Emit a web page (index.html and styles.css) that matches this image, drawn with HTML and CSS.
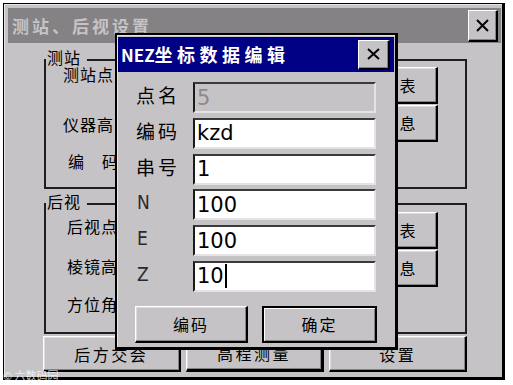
FILE: index.html
```html
<!DOCTYPE html>
<html lang="zh">
<head>
<meta charset="utf-8">
<title>测站、后视设置</title>
<link rel="stylesheet" href="styles.css">
</head>
<body>
<div class="window">
  <div class="titlebar">
    <span class="title">测站、后视设置</span>
    <div class="close-btn">
      <svg width="13" height="13" viewBox="0 0 13 13"><path d="M1 1 L12 12 M12 1 L1 12" stroke="#000" stroke-width="2" fill="none"/></svg>
    </div>
  </div>
  <div class="client">
    <div class="group g1">
      <span class="legend">测站</span>
      <div class="labels">
        <div class="lbl">测站点名</div>
        <div class="lbl">仪器高</div>
        <div class="lbl lbl-code">编　码</div>
      </div>
      <div class="side-btns">
        <div class="btn side-btn">坐标列表</div>
        <div class="btn side-btn">测站信息</div>
      </div>
    </div>
    <div class="group g2">
      <span class="legend">后视</span>
      <div class="labels">
        <div class="lbl">后视点名</div>
        <div class="lbl">棱镜高</div>
        <div class="lbl">方位角</div>
      </div>
      <div class="side-btns">
        <div class="btn side-btn">坐标列表</div>
        <div class="btn side-btn">后视信息</div>
      </div>
    </div>
    <div class="bottom-row">
      <div class="btn bottom-btn">后方交会</div>
      <div class="btn bottom-btn focus">高程测量</div>
      <div class="btn bottom-btn">设置</div>
    </div>
  </div>

  <div class="dialog">
    <div class="dlg-titlebar">
      <span class="dlg-title"><span class="dlg-title-latin">NEZ</span>坐标数据编辑</span>
      <div class="close-btn dlg-close">
        <svg width="13" height="12" viewBox="0 0 13 12"><path d="M1 1 L12 11 M12 1 L1 11" stroke="#000" stroke-width="2" fill="none"/></svg>
      </div>
    </div>
    <div class="dlg-body">
      <div class="fields">
        <div class="f-lbl cjk">点名</div>
        <div class="input disabled">5</div>
        <div class="f-lbl cjk">编码</div>
        <div class="input">kzd</div>
        <div class="f-lbl cjk">串号</div>
        <div class="input">1</div>
        <div class="f-lbl latin">N</div>
        <div class="input">100</div>
        <div class="f-lbl latin">E</div>
        <div class="input">100</div>
        <div class="f-lbl latin">Z</div>
        <div class="input">10<span class="caret"></span></div>
      </div>
      <div class="dlg-btns">
        <div class="btn dlg-btn">编码</div>
        <div class="btn dlg-btn default">确定</div>
      </div>
    </div>
  </div>
</div>
<span class="watermark">© 六数码园</span>
</body>
</html>
```
FILE: styles.css
```css
* { box-sizing: border-box; }
html, body { margin: 0; padding: 0; background: #fff; }
body {
  width: 513px;
  height: 385px;
  overflow: hidden;
  position: relative;
  font-family: "Noto Sans CJK SC", "Noto Sans", sans-serif;
  color: #000;
}

.window {
  position: relative;
  margin: 3px 0 0 3px;
  width: 502px;
  height: 377px;
  border-style: solid;
  border-color: #000;
  border-width: 1px 3px 3px 1px;
  background: #c6c3c6;
  padding: 4px 1px 1px 4px;
  box-shadow: inset 1px 1px #e6e4e6;
  display: flex;
  flex-direction: column;
}

.titlebar {
  height: 35px;
  flex: none;
  background: #848284;
  display: flex;
  align-items: center;
  justify-content: space-between;
  padding: 0 3px 0 4px;
}
.title {
  color: #c6c3c6;
  font-weight: 700;
  font-size: 17px;
  letter-spacing: 3px;
  line-height: 20px;
}

.close-btn {
  width: 30px;
  height: 32px;
  background: #c6c3c6;
  border-style: solid;
  border-width: 1px 2px 2px 1px;
  border-color: #fff #000 #000 #fff;
  box-shadow: inset -1px -1px #848284;
  display: flex;
  align-items: center;
  justify-content: center;
}

.client {
  flex: 1;
  display: flex;
  flex-direction: column;
  padding: 0 34px 0 36px;
}

.group {
  position: relative;
  border: 2px solid #1e1e1e;
  display: flex;
  justify-content: space-between;
  flex: none;
}
.g1 { margin-top: 16px; height: 130px; }
.g2 { margin-top: 14px; height: 131px; }

.legend {
  position: absolute;
  top: -12px;
  left: 0;
  padding: 0 6px 0 1px;
  background: #c6c3c6;
  font-size: 16px;
  letter-spacing: 1px;
  line-height: 16px;
}

.labels {
  display: flex;
  flex-direction: column;
  font-size: 16px;
  letter-spacing: 1px;
  line-height: 16px;
}
.g1 .labels { padding: 5px 0 0 17px; }
.g1 .lbl:nth-child(2) { margin-top: 34px; }
.g1 .lbl:nth-child(3) { margin-top: 21px; }
.lbl-code { padding-left: 5px; }
.g2 .labels { padding: 13px 0 0 21px; }
.g2 .lbl:nth-child(2) { margin-top: 24px; }
.g2 .lbl:nth-child(3) { margin-top: 22px; }

.btn {
  background: #c6c3c6;
  border-style: solid;
  border-width: 1px 2px 2px 1px;
  border-color: #fff #000 #000 #fff;
  box-shadow: inset -1px -1px #848284, inset 1px 1px #dedbde;
  display: flex;
  align-items: center;
  justify-content: center;
  font-size: 16px;
  letter-spacing: 2px;
  line-height: 20px;
}

.side-btns {
  display: flex;
  flex-direction: column;
  gap: 1px;
  margin-right: 27px;
}
.g1 .side-btns { padding-top: 6px; }
.g2 .side-btns { padding-top: 7px; }
.side-btn {
  width: 110px;
  height: 37px;
  letter-spacing: 1px;
}

.bottom-row {
  margin: 2px 0 0 -1px;
  height: 36px;
  display: flex;
  gap: 5px;
}
.bottom-btn {
  flex: 1;
  height: 36px;
  letter-spacing: 2.5px;
}
.bottom-btn.focus { border-width: 1px 3px 3px 1px; }

/* dialog */
.dialog {
  position: absolute;
  left: 111px;
  top: 29px;
  width: 283px;
  height: 317px;
  background: #c6c3c6;
  border-style: solid;
  border-color: #000;
  border-width: 2px 3px 3px 2px;
  padding: 2px 1px 1px 1px;
  box-shadow: inset 1px 1px #e6e4e6;
  display: flex;
  flex-direction: column;
}
.dlg-titlebar {
  flex: none;
  height: 35px;
  background: #000084;
  display: flex;
  align-items: center;
  justify-content: space-between;
  padding: 0 4px 0 3px;
}
.dlg-title {
  color: #fff;
  font-weight: 700;
  font-size: 18px;
  letter-spacing: 4.5px;
  line-height: 20px;
}
.dlg-title-latin {
  font-size: 17px;
  letter-spacing: 0;
}
.dlg-close {
  width: 32px;
  height: 30px;
  border-width: 1px 2px 2px 1px;
}

.dlg-body {
  padding: 10px 0 0 18px;
  display: flex;
  flex-direction: column;
}
.fields {
  display: grid;
  grid-template-columns: 57px 183px;
  grid-auto-rows: 31px;
  row-gap: 4.8px;
}
.f-lbl {
  line-height: 26px;
  padding-bottom: 5px;
}
.f-lbl.cjk {
  font-size: 19px;
  letter-spacing: 3px;
}
.f-lbl.latin {
  font-family: "DejaVu Sans Condensed", "DejaVu Sans", sans-serif;
  font-size: 19px;
  color: #2a2a2a;
  padding-left: 1px;
}
.input {
  background: #fff;
  border-style: solid;
  border-width: 2px;
  border-color: #3a3a3a #e4e2e4 #e4e2e4 #1a1a1a;
  font-family: "DejaVu Sans", sans-serif;
  font-size: 21px;
  line-height: 28px;
  padding: 0 0 0 2px;
  display: flex;
  align-items: center;
  white-space: nowrap;
}
.input.disabled {
  background: #c6c3c6;
  color: #8c8a8c;
}
.caret {
  display: inline-block;
  width: 2px;
  height: 24px;
  background: #000;
  margin-left: 1px;
}

.dlg-btns {
  display: flex;
  gap: 14px;
  margin: 14px 0 0 -1px;
}
.dlg-btn {
  height: 37px;
  width: 113px;
}
.dlg-btn.default {
  width: 115px;
  border: 2px solid #000;
  box-shadow: inset 1px 1px #fff, inset -1px -1px #848284;
}

.watermark {
  position: absolute;
  left: 3px;
  top: 368px;
  font-size: 11px;
  line-height: 14px;
  color: rgba(255, 255, 255, 0.75);
}
```
